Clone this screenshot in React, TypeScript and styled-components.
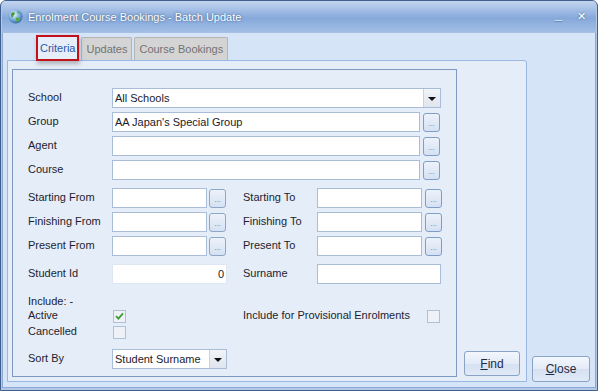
import * as React from 'react';
import styled, { createGlobalStyle } from 'styled-components';

const GlobalStyle = createGlobalStyle`
    html, body {
        margin: 0;
        padding: 0;
        background: #ffffff;
    }
    body {
        font-family: "Liberation Sans", Arial, sans-serif;
        font-size: 11px;
        color: #1b1b2b;
    }
`;

interface RowProps {
    $top: number;
}

interface BoxProps {
    $width: number;
}

const Globe = () => (
    <svg width="15" height="15" viewBox="0 0 15 15">
        <defs>
            <radialGradient id="sea" cx="0.4" cy="0.35" r="0.7">
                <stop offset="0" stopColor="#e9f5ff" />
                <stop offset="0.6" stopColor="#6fa6d8" />
                <stop offset="1" stopColor="#2f5f9c" />
            </radialGradient>
        </defs>
        <circle cx="7.5" cy="7.5" r="7" fill="url(#sea)" />
        <path d="M3 5 C4 3 6 3 7 4 C7 6 5 6 5 8 C4 9 3 8 3 5 Z" fill="#4a9a3c" />
        <path d="M8 9 C10 8 12 9 12 11 C11 13 9 13 8 12 Z" fill="#5aa845" />
        <path d="M9 3 C10 2.5 11.5 3 12 4.5 C11 5 10 4.5 9 3 Z" fill="#5aa845" />
    </svg>
);

export default function App() {
    return (
        <>
            <GlobalStyle />
            <Window>
                <TitleBar>
                    <TitleLeft>
                        <Globe />
                        <TitleText>Enrolment Course Bookings - Batch Update</TitleText>
                    </TitleLeft>
                    <TitleButtons>
                        <Minimize>_</Minimize>
                        <CloseX>✕</CloseX>
                    </TitleButtons>
                </TitleBar>
                <Body>
                    <TabControl>
                        <TabStrip>
                            <Tab $active>Criteria</Tab>
                            <Tab>Updates</Tab>
                            <Tab>Course Bookings</Tab>
                        </TabStrip>
                        <TabPage>
                            <GroupBox>
                                <Row $top={0}>
                                    <Label $width={84}>School</Label>
                                    <Combo $width={329}>
                                        <ComboText>All Schools</ComboText>
                                        <DropButton><Arrow /></DropButton>
                                    </Combo>
                                </Row>
                                <Row $top={4}>
                                    <Label $width={84}>Group</Label>
                                    <TextBox $width={308}>AA Japan's Special Group</TextBox>
                                    <Ellipsis>...</Ellipsis>
                                </Row>
                                <Row $top={4}>
                                    <Label $width={84}>Agent</Label>
                                    <TextBox $width={308} />
                                    <Ellipsis>...</Ellipsis>
                                </Row>
                                <Row $top={4}>
                                    <Label $width={84}>Course</Label>
                                    <TextBox $width={308} />
                                    <Ellipsis>...</Ellipsis>
                                </Row>
                                {[
                                    ['Starting From', 'Starting To'],
                                    ['Finishing From', 'Finishing To'],
                                    ['Present From', 'Present To'],
                                ].map(([from, to], i) => (
                                    <Row $top={i === 0 ? 8 : 4} key={from}>
                                        <Label $width={84}>{from}</Label>
                                        <TextBox $width={95} />
                                        <DateEllipsis>...</DateEllipsis>
                                        <Label $width={74}>{to}</Label>
                                        <TextBox $width={105} />
                                        <Ellipsis>...</Ellipsis>
                                    </Row>
                                ))}
                                <Row $top={8}>
                                    <Label $width={84}>Student Id</Label>
                                    <NumberBox $width={115}>0</NumberBox>
                                    <Spacer $width={16} />
                                    <Label $width={74}>Surname</Label>
                                    <TextBox $width={124} />
                                </Row>
                                <IncludeLabel>Include: -</IncludeLabel>
                                <CheckRow $top={1}>
                                    <Label $width={85}>Active</Label>
                                    <CheckBox>
                                        <svg width="9" height="8" viewBox="0 0 9 8">
                                            <path d="M1 4.2 L3.4 6.6 L8 1.4" stroke="#3a9c35" strokeWidth="1.8" fill="none" />
                                        </svg>
                                    </CheckBox>
                                    <Spacer $width={117} />
                                    <Label $width={184}>Include for Provisional Enrolments</Label>
                                    <CheckBox />
                                </CheckRow>
                                <CheckRow $top={2}>
                                    <Label $width={85}>Cancelled</Label>
                                    <CheckBox />
                                </CheckRow>
                                <Row $top={10}>
                                    <Label $width={84}>Sort By</Label>
                                    <Combo $width={115}>
                                        <ComboText>Student Surname</ComboText>
                                        <DropButton><Arrow /></DropButton>
                                    </Combo>
                                </Row>
                            </GroupBox>
                            <FindColumn>
                                <PushButton $width={56} $height={25}><u>F</u>ind</PushButton>
                            </FindColumn>
                        </TabPage>
                    </TabControl>
                    <SideColumn>
                        <PushButton $width={58} $height={26}><u>C</u>lose</PushButton>
                    </SideColumn>
                </Body>
            </Window>
        </>
    );
}


/** styling */

const Window = styled.div`
    box-sizing: border-box;
    width: 598px;
    height: 391px;
    display: flex;
    flex-direction: column;
    border: 1px solid #3f5f8e;
    border-radius: 6px 6px 0 0;
    background: #b3c8e8;
    padding: 0 1px 2px 1px;
    overflow: hidden;
`;

const TitleBar = styled.div`
    height: 31px;
    flex-shrink: 0;
    display: flex;
    align-items: center;
    justify-content: space-between;
    padding: 0 10px 0 6px;
    background: linear-gradient(to bottom, #c3d5ef 0%, #a2bde5 30%, #86a9da 55%, #a2bee6 100%);
    border-bottom: 1px solid #a6c0e5;
`;

const TitleLeft = styled.div`
    display: flex;
    align-items: center;
    gap: 5px;
`;

const TitleText = styled.span`
    font-family: "Liberation Sans", Arial, sans-serif;
    font-size: 11px;
    color: #ffffff;
    text-shadow: 0 0 3px #4d6f9f, 0 0 1px #4d6f9f;
    margin-top: 1px;
`;

const TitleButtons = styled.div`
    display: flex;
    align-items: center;
    gap: 15px;
`;

const Minimize = styled.span`
    font-size: 13px;
    font-weight: bold;
    color: #ffffff;
    text-shadow: 0 1px 1px #3f5f8e;
    margin-top: -4px;
`;

const CloseX = styled.span`
    font-size: 11px;
    color: #ffffff;
    text-shadow: 0 0 2px #3f5f8e;
`;

const Body = styled.div`
    flex: 1;
    display: flex;
    border: 1px solid #8ea9d1;
    border-top: none;
    background: #d6e4f8;
    padding: 0 5px 5px 4px;
`;

const TabControl = styled.div`
    width: 520px;
    display: flex;
    flex-direction: column;
`;

const TabStrip = styled.div`
    height: 27px;
    display: flex;
    align-items: flex-end;
    padding-left: 29px;
    gap: 2px;
`;

const Tab = styled.div<{ $active?: boolean }>`
    box-sizing: border-box;
    height: ${props => props.$active ? '26px' : '23px'};
    padding: 0 ${props => props.$active ? '2px' : '4px'};
    display: flex;
    align-items: center;
    font-size: 11px;
    color: ${props => props.$active ? '#2b58a8' : '#727272'};
    background: ${props => props.$active ? '#e6eef9' : '#d4d4d4'};
    border: ${props => props.$active ? '2px solid #c1121c' : '1px solid #b4b4b4'};
    border-bottom: ${props => props.$active ? '2px solid #c1121c' : 'none'};
    border-radius: ${props => props.$active ? '0' : '2px 2px 0 0'};
    box-shadow: ${props => props.$active ? '1px 3px 4px rgba(80, 80, 80, 0.35)' : 'none'};
    margin-bottom: ${props => props.$active ? '-1px' : '0'};
    position: relative;
    z-index: ${props => props.$active ? 2 : 0};
`;

const TabPage = styled.div`
    flex: 1;
    display: flex;
    align-items: flex-end;
    border: 1px solid #98b7e2;
    border-radius: 0 3px 0 0;
    background: #e5edf8;
    padding: 8px 6px 4px 4px;
`;

const GroupBox = styled.div`
    box-sizing: border-box;
    width: 445px;
    height: 100%;
    border: 1px solid #7f9abf;
    padding: 18px 0 0 15px;
    display: flex;
    flex-direction: column;
`;

const FindColumn = styled.div`
    flex: 1;
    display: flex;
    justify-content: flex-end;
    padding-bottom: 1px;
`;

const SideColumn = styled.div`
    flex: 1;
    display: flex;
    justify-content: flex-end;
    align-items: flex-end;
`;

const Row = styled.div<RowProps>`
    display: flex;
    align-items: center;
    height: 20px;
    margin-top: ${props => props.$top}px;
`;

const CheckRow = styled(Row)`
    height: 14px;
`;

const Label = styled.div<BoxProps>`
    width: ${props => props.$width}px;
    flex-shrink: 0;
    white-space: nowrap;
    color: #1d1d2f;
    margin-top: -2px;
`;

const IncludeLabel = styled.div`
    margin-top: 10px;
    height: 14px;
    line-height: 14px;
`;

const Spacer = styled.div<BoxProps>`
    width: ${props => props.$width}px;
    flex-shrink: 0;
`;

const TextBox = styled.div<BoxProps>`
    box-sizing: border-box;
    width: ${props => props.$width}px;
    height: 20px;
    flex-shrink: 0;
    background: #ffffff;
    border: 1px solid #a9bdd9;
    padding: 0 2px;
    display: flex;
    align-items: center;
    font-size: 11px;
    white-space: nowrap;
    overflow: hidden;
`;

const NumberBox = styled(TextBox)`
    justify-content: flex-end;
    border-color: #dde6f2;
    padding-right: 2px;
`;

const Combo = styled.div<BoxProps>`
    box-sizing: border-box;
    width: ${props => props.$width}px;
    height: 20px;
    flex-shrink: 0;
    display: flex;
    background: #ffffff;
    border: 1px solid #a9bdd9;
`;

const ComboText = styled.div`
    flex: 1;
    display: flex;
    align-items: center;
    padding: 0 2px;
    font-size: 11px;
    white-space: nowrap;
    overflow: hidden;
`;

const DropButton = styled.div`
    width: 16px;
    display: flex;
    align-items: center;
    justify-content: center;
    background: linear-gradient(to bottom, #f2f4f8, #dfe5ee);
    border-left: 1px solid #c6d2e3;
`;

const Arrow = styled.div`
    width: 0;
    height: 0;
    border-left: 4px solid transparent;
    border-right: 4px solid transparent;
    border-top: 4px solid #111111;
    margin-top: 1px;
`;

const Ellipsis = styled.div`
    box-sizing: border-box;
    width: 17px;
    height: 19px;
    flex-shrink: 0;
    margin-left: 3px;
    border: 1px solid #7f9dc6;
    border-radius: 3px;
    background: linear-gradient(to bottom, #edf2fa, #d5e1f2);
    color: #5a86c8;
    font-size: 8px;
    display: flex;
    align-items: center;
    justify-content: center;
    padding-top: 2px;
`;

const DateEllipsis = styled(Ellipsis)`
    margin-left: 2px;
    margin-right: 17px;
    border-color: #8ea6c8;
    color: #6f7f99;
`;

const CheckBox = styled.div`
    box-sizing: border-box;
    width: 13px;
    height: 13px;
    flex-shrink: 0;
    border: 1px solid #b0c0d6;
    background: #eef2f8;
    display: flex;
    align-items: center;
    justify-content: center;
`;

const PushButton = styled.div<BoxProps & { $height: number }>`
    box-sizing: border-box;
    width: ${props => props.$width}px;
    height: ${props => props.$height}px;
    display: flex;
    align-items: center;
    justify-content: center;
    border: 1px solid #8ba3c7;
    border-radius: 3px;
    background: linear-gradient(to bottom, #f3f7fd 0%, #e3ebf7 50%, #d5e1f2 51%, #e0e9f6 100%);
    font-size: 12px;
    color: #1e2a44;
`;
